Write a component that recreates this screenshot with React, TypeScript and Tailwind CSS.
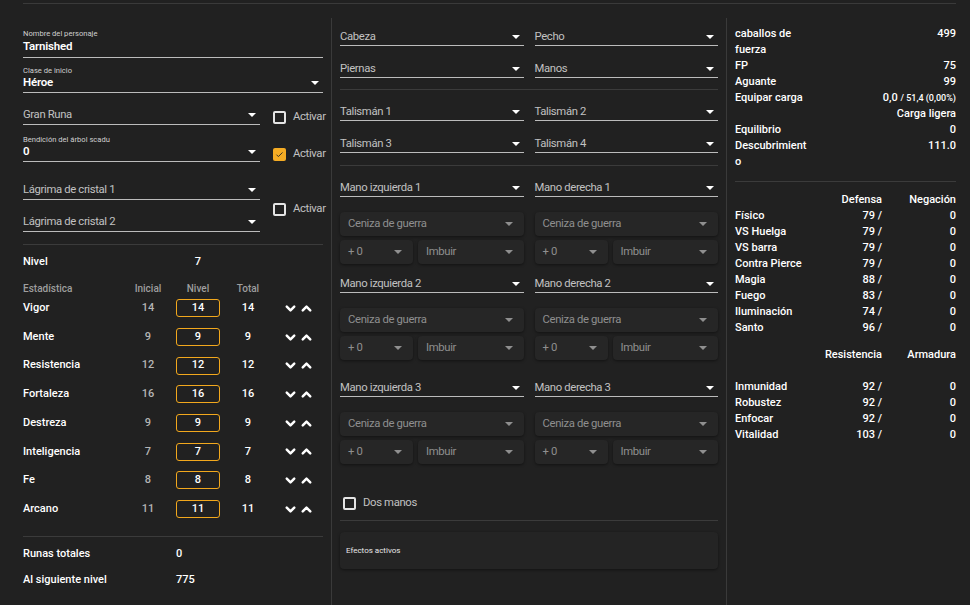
import { ChevronDown, ChevronUp } from "lucide-react"

const stats = [
  { name: "Vigor", base: 14 },
  { name: "Mente", base: 9 },
  { name: "Resistencia", base: 12 },
  { name: "Fortaleza", base: 16 },
  { name: "Destreza", base: 9 },
  { name: "Inteligencia", base: 7 },
  { name: "Fe", base: 8 },
  { name: "Arcano", base: 11 },
]

const defenses = [
  ["Físico", 79],
  ["VS Huelga", 79],
  ["VS barra", 79],
  ["Contra Pierce", 79],
  ["Magia", 88],
  ["Fuego", 83],
  ["Iluminación", 74],
  ["Santo", 96],
] as const

const resistances = [
  ["Inmunidad", 92],
  ["Robustez", 92],
  ["Enfocar", 92],
  ["Vitalidad", 103],
] as const

// tight text used by the form controls
const inputText = "text-[11.3px] tracking-[-0.35px]"

function Arrow({ className = "" }: { className?: string }) {
  return (
    <svg width="8" height="4" viewBox="0 0 8 4" className={`shrink-0 ${className}`}>
      <path d="M0 0h8L4 4z" fill="currentColor" />
    </svg>
  )
}

function Checkbox({ checked = false }: { checked?: boolean }) {
  if (checked) {
    return (
      <span className="flex h-[13px] w-[13px] shrink-0 items-center justify-center rounded-[2px] bg-[#f5ac24]">
        <svg width="9" height="9" viewBox="0 0 24 24">
          <path d="M4 12.5l5 5L20 6.5" fill="none" stroke="#2a2a2a" strokeWidth="2.5" />
        </svg>
      </span>
    )
  }
  return <span className="block h-[13px] w-[13px] shrink-0 rounded-[2px] border-2 border-[#e4e4e4]" />
}

function LineSelect({
  label,
  value,
  placeholder,
  pb = "pb-px",
}: {
  label?: string
  value?: string
  placeholder?: string
  pb?: string
}) {
  return (
    <div className={`border-b border-[#bcbcbc] ${pb}`}>
      {label && <div className="text-[7.6px] leading-[9px] text-[#d0d0d0]">{label}</div>}
      <div className="flex h-4 items-center justify-between pr-[4px]">
        <span
          className={
            value
              ? "text-[11.5px] font-semibold tracking-[-0.2px] text-white"
              : `${inputText} text-[#c2c2c2]`
          }
        >
          {value ?? placeholder}
        </span>
        <Arrow className="text-white" />
      </div>
    </div>
  )
}

function Pair({ a, b, className = "" }: { a: string; b: string; className?: string }) {
  return (
    <div className={`grid grid-cols-2 gap-x-[11px] ${className}`}>
      <LineSelect placeholder={a} pb="pb-0" />
      <LineSelect placeholder={b} pb="pb-0" />
    </div>
  )
}

function Box({ children }: { children: React.ReactNode }) {
  return (
    <div
      className={`flex h-6 items-center justify-between rounded-[4px] bg-[#262626] pl-2 pr-[11px] text-[#8f8f8f] shadow-[0_1px_3px_rgba(0,0,0,0.45)] ${inputText}`}
    >
      <span>{children}</span>
      <Arrow className="text-[#8f8f8f]" />
    </div>
  )
}

function WeaponExtras() {
  return (
    <div>
      <Box>Ceniza de guerra</Box>
      <div className="mt-1 grid grid-cols-[73px_1fr] gap-[5px]">
        <Box>+ 0</Box>
        <Box>Imbuir</Box>
      </div>
    </div>
  )
}

function Weapon({ slot, className = "" }: { slot: number; className?: string }) {
  return (
    <div className={className}>
      <Pair a={`Mano izquierda ${slot}`} b={`Mano derecha ${slot}`} />
      <div className="mt-[15px] grid grid-cols-2 gap-x-[11px]">
        <WeaponExtras />
        <WeaponExtras />
      </div>
    </div>
  )
}

function Activar({ checked = false, className = "" }: { checked?: boolean; className?: string }) {
  return (
    <label
      className={`flex h-[13px] shrink-0 items-center gap-[7px] text-[#c2c2c2] ${inputText} ${className}`}
    >
      <Checkbox checked={checked} />
      Activar
    </label>
  )
}

export default function App() {
  return (
    <div className="h-[605px] overflow-hidden bg-[#212121] pl-[23px] pr-[14px] font-['Roboto',sans-serif] text-white">
      <div className="h-[4px] border-b border-[#3a3a3a]" />
      <div className="mt-[14px] flex h-[587px]">
        {/* Character column */}
        <div className="w-[300px] shrink-0 pt-[11px]">
          <div className="border-b border-[#bcbcbc] pb-[3px]">
            <div className="text-[7.6px] leading-[9px] text-[#d0d0d0]">Nombre del personaje</div>
            <div className="h-4 text-[11.5px] font-semibold leading-4 tracking-[-0.2px] text-white">
              Tarnished
            </div>
          </div>
          <div className="mt-2">
            <LineSelect label="Clase de inicio" value="Héroe" />
          </div>

          <div className="mt-[14px] flex items-end gap-[13px]">
            <div className="flex-1">
              <LineSelect placeholder="Gran Runa" />
            </div>
            <Activar className="mb-px w-[50px]" />
          </div>

          <div className="mt-[10px] flex items-end gap-[13px]">
            <div className="flex-1">
              <LineSelect label="Bendición del árbol scadu" value="0" />
            </div>
            <Activar checked className="mb-px w-[50px]" />
          </div>

          <div className="mt-[20px] flex items-center gap-[13px]">
            <div className="flex-1">
              <LineSelect placeholder="Lágrima de cristal 1" />
              <div className="mt-[14px]">
                <LineSelect placeholder="Lágrima de cristal 2" />
              </div>
            </div>
            <Activar className="mt-[5px] w-[50px]" />
          </div>

          <div className="mt-[12px] h-px bg-[#3b3b3b]" />

          <div className="mt-[8px] grid h-[18px] grid-cols-[100px_50px_50px_50px_50px] items-center text-[11px] font-medium">
            <span>Nivel</span>
            <span />
            <span className="text-center">7</span>
          </div>

          <div className="mt-[10px] grid h-[10px] grid-cols-[100px_50px_50px_50px_50px] items-center text-[10px] font-medium text-[#9e9e9e]">
            <span>Estadística</span>
            <span className="text-center">Inicial</span>
            <span className="text-center">Nivel</span>
            <span className="text-center">Total</span>
          </div>

          <div className="mt-[3px]">
            {stats.map((s) => (
              <div
                key={s.name}
                className="grid h-[28.7px] grid-cols-[100px_50px_50px_50px_50px] items-center text-[11px] font-medium"
              >
                <span>{s.name}</span>
                <span className="text-center text-[#b5b5b5]">{s.base}</span>
                <span className="flex justify-center">
                  <span className="flex h-[18px] w-[44px] items-center justify-center rounded-[3px] border border-[#f2a81d]">
                    {s.base}
                  </span>
                </span>
                <span className="text-center">{s.base}</span>
                <span className="flex justify-center gap-px">
                  <ChevronDown size={15} strokeWidth={4} />
                  <ChevronUp size={15} strokeWidth={4} />
                </span>
              </div>
            ))}
          </div>

          <div className="mt-[12px] h-px bg-[#3b3b3b]" />

          <div className="mt-[9px] grid h-[18px] grid-cols-[153px_1fr] items-center text-[11px] font-medium">
            <span>Runas totales</span>
            <span>0</span>
          </div>
          <div className="mt-[8px] grid h-[18px] grid-cols-[153px_1fr] items-center text-[11px] font-medium">
            <span>Al siguiente nivel</span>
            <span>775</span>
          </div>
        </div>

        {/* Equipment column */}
        <div className="ml-[8px] w-[387px] shrink-0 border-l border-[#3a3a3a] pl-[8px]">
          <Pair a="Cabeza" b="Pecho" className="mt-[11px]" />
          <Pair a="Piernas" b="Manos" className="mt-[15px]" />
          <div className="mt-[11px] h-px bg-[#3b3b3b]" />
          <Pair a="Talismán 1" b="Talismán 2" className="mt-[14px]" />
          <Pair a="Talismán 3" b="Talismán 4" className="mt-[15px]" />
          <div className="mt-[12px] h-px bg-[#3b3b3b]" />
          <Weapon slot={1} className="mt-[14px]" />
          <Weapon slot={2} className="mt-[12px]" />
          <Weapon slot={3} className="mt-[20px]" />

          <label
            className={`ml-[3px] mt-[33px] flex h-[13px] items-center gap-[7px] text-[#c2c2c2] ${inputText}`}
          >
            <Checkbox />
            Dos manos
          </label>
          <div className="mt-[10px] h-px bg-[#3b3b3b]" />
          <div className="mt-[11px] flex h-[37px] items-center rounded-[4px] bg-[#242424] pl-[6px] text-[8px] text-[#e8e8e8] shadow-[0_1px_3px_rgba(0,0,0,0.45)]">
            Efectos activos
          </div>
        </div>

        {/* Stats column */}
        <div className="ml-[8px] flex-1 border-l border-[#3a3a3a] pl-[8px] pt-[8px] text-[11px] font-medium leading-4">
          <div className="grid grid-cols-[73px_1fr]">
            <span className="break-words">caballos de fuerza</span>
            <span className="text-right">499</span>
            <span>FP</span>
            <span className="text-right">75</span>
            <span>Aguante</span>
            <span className="text-right">99</span>
            <span className="whitespace-nowrap">Equipar carga</span>
            <span className="text-right">
              0,0 <span className="text-[9px]">/ 51,4 (0,00%)</span>
            </span>
            <span />
            <span className="text-right">Carga ligera</span>
            <span>Equilibrio</span>
            <span className="text-right">0</span>
            <span className="break-all">Descubrimiento</span>
            <span className="text-right">111.0</span>
          </div>

          <div className="mt-[11px] h-px bg-[#3b3b3b]" />

          <div className="mt-[10px] grid grid-cols-[1fr_70px_74px]">
            <span />
            <span className="text-right">Defensa</span>
            <span className="text-right">Negación</span>
            {defenses.map(([n, v]) => (
              <div key={n} className="contents">
                <span>{n}</span>
                <span className="text-right">{v} /</span>
                <span className="text-right">0</span>
              </div>
            ))}
          </div>

          <div className="mt-[11px] grid grid-cols-[1fr_70px_74px]">
            <span />
            <span className="text-right">Resistencia</span>
            <span className="text-right">Armadura</span>
          </div>
          <div className="mt-4 grid grid-cols-[1fr_70px_74px]">
            {resistances.map(([n, v]) => (
              <div key={n} className="contents">
                <span>{n}</span>
                <span className="text-right">{v} /</span>
                <span className="text-right">0</span>
              </div>
            ))}
          </div>
        </div>
      </div>
    </div>
  )
}
